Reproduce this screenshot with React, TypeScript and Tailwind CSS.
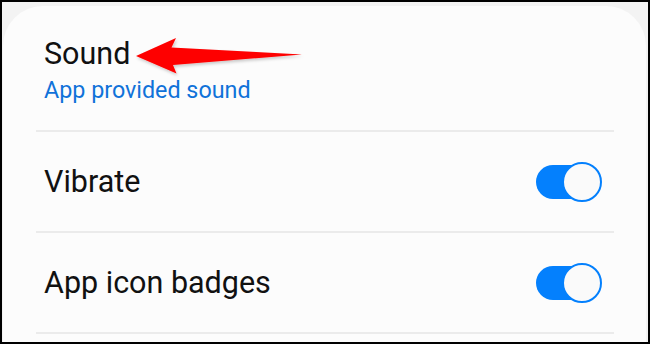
import React from "react";

function Toggle() {
  return (
    <div className="relative w-[66px] h-[40px] shrink-0">
      <div className="absolute left-0 top-[3px] w-[56px] h-[34px] rounded-full bg-[#0480fd]" />
      <div className="absolute right-0 top-0 w-[40px] h-[40px] rounded-full bg-[#fafafa] border-2 border-[#0480fd]" />
    </div>
  );
}

function Divider() {
  return <div className="h-[2px] bg-[#ebebeb]" />;
}

export default function App() {
  return (
    <div
      className="relative w-[650px] h-[344px] border-2 border-black bg-[#f3f3f3] overflow-hidden pt-[4px] pl-[1px] pr-[2px]"
      style={{ fontFamily: "Roboto, 'Liberation Sans', sans-serif" }}
    >
      <div className="h-full rounded-t-[40px] bg-[#fcfcfc] pl-[33px] pr-[32px]">
        <div className="pt-[30px] pb-[26px] pl-[8px] flex flex-col gap-[4px]">
          <div className="text-[30.5px] leading-[36px] font-normal text-[#111]">Sound</div>
          <div className="text-[23.3px] leading-[28px] font-normal text-[#1072d9]">App provided sound</div>
        </div>
        <Divider />
        <div className="h-[99px] flex items-center justify-between pl-[8px] pr-[12px]">
          <div className="text-[30.5px] leading-[36px] font-normal text-[#111]">Vibrate</div>
          <Toggle />
        </div>
        <Divider />
        <div className="h-[99px] flex items-center justify-between pl-[8px] pr-[12px]">
          <div className="text-[30.5px] leading-[36px] font-normal text-[#111]">App icon badges</div>
          <Toggle />
        </div>
        <Divider />
      </div>
      <svg
        className="absolute left-0 top-0"
        width="650"
        height="344"
        viewBox="-2 -2 650 344"
      >
        <defs>
          <filter id="sh" x="-10%" y="-50%" width="120%" height="200%">
            <feDropShadow dx="1" dy="2" stdDeviation="1.5" floodColor="#000" floodOpacity="0.2" />
          </filter>
        </defs>
        <polygon
          points="132,52 172,34 167.5,43.5 298,50.5 169,61 172.5,69.5"
          fill="#fe0000"
          filter="url(#sh)"
        />
      </svg>
    </div>
  );
}
